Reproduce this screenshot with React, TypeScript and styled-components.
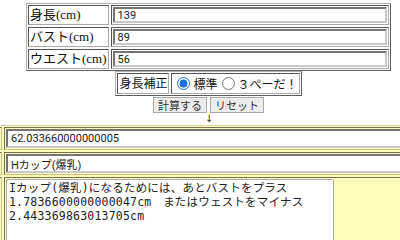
import React from 'react'
import styled, { createGlobalStyle } from 'styled-components'

const GlobalStyle = createGlobalStyle`
  html, body {
    margin: 0;
    padding: 0;
    background: #fff;
    overflow: hidden;
  }
  body {
    width: 400px;
    height: 240px;
  }
`

const Page = styled.div`
  width: 417px;
  display: flex;
  flex-direction: column;
  align-items: center;
  padding-top: 3px;
`

const FormTable = styled.div<{ columns: string; width?: string; size?: number }>`
  display: grid;
  grid-template-columns: ${({ columns }) => columns};
  width: ${({ width }) => width || 'auto'};
  box-sizing: border-box;
  gap: 2px;
  padding: 1px;
  border: 1px outset #b0b0b0;
  font-family: "Liberation Serif", "Noto Sans CJK JP", serif;
  font-size: ${({ size }) => size || 13}px;
  line-height: 16px;
  color: #111;
`

const Cell = styled.div<{ rowHeight?: number }>`
  border: 1px inset #a8a8a8;
  padding: 1px;
  display: flex;
  align-items: center;
  min-height: ${({ rowHeight }) => rowHeight || 16}px;
`

const TextInput = styled.input<{ tall?: boolean }>`
  width: 100%;
  box-sizing: border-box;
  height: ${({ tall }) => (tall ? '19px' : '16px')};
  margin: 0;
  padding: 0 3px;
  border: 2px inset #c8c8c8;
  font-family: Roboto, "Noto Sans CJK JP", sans-serif;
  font-size: 11px;
  color: #222;
  background: #fff;
`

const RadioLabel = styled.label`
  display: flex;
  align-items: center;
  font-family: "Noto Sans CJK JP", sans-serif;
  font-size: 12px;

  input {
    margin: 0 3px 0 4px;
    width: 13px;
    height: 13px;
    accent-color: #1a6fe8;
  }
`

const ButtonRow = styled.div`
  display: flex;
  gap: 3px;
  margin-top: 1px;
`

const Button = styled.button`
  font-family: "Noto Sans CJK JP", sans-serif;
  font-size: 11px;
  line-height: 12px;
  padding: 1px 4px;
  background: #ececec;
  border: 1px solid #a8a8a8;
  border-radius: 0;
  color: #333;
`

const Arrow = styled.div`
  font-family: "DejaVu Sans", sans-serif;
  font-size: 10px;
  line-height: 12px;
  color: #333;
  padding-left: 1px;
`

const ResultTable = styled.div`
  align-self: flex-start;
  margin-left: -60px;
  width: 520px;
  display: grid;
  grid-template-columns: 60px 1fr;
  gap: 2px;
  padding: 1px;
  border: 1px outset #d8d0a0;
  background: #fffcbc;
  font-family: "Liberation Serif", "Noto Sans CJK JP", serif;
  font-size: 13px;
  line-height: 17px;
  color: #111;
`

const ResultCell = styled.div`
  border: 1px inset #c8c088;
  padding: 1px;
  display: flex;
  align-items: flex-start;
  justify-content: flex-end;
  min-height: 19px;
  overflow: hidden;
`

const ResultValue = styled(ResultCell)`
  justify-content: flex-start;
`

const MessageBox = styled.textarea`
  width: 328px;
  height: 72px;
  box-sizing: border-box;
  margin: 0;
  padding: 1px 2px;
  border: 1px solid #a8a8a8;
  border-radius: 2px;
  font-family: "DejaVu Sans Mono", "Noto Sans CJK JP", monospace;
  font-size: 11.5px;
  letter-spacing: 0.2px;
  line-height: 14px;
  color: #222;
  resize: none;
  background: #fff;
`

const sizes = [
  { label: '身長(cm)', value: '139' },
  { label: 'バスト(cm)', value: '89' },
  { label: 'ウエスト(cm)', value: '56' },
]

const message =
  'Iカップ(爆乳)になるためには、あとバストをプラス\n1.7836600000000047cm　またはウェストをマイナス\n2.443369863013705cm'

export default function App() {
  return (
    <>
      <GlobalStyle />
      <Page>
        <FormTable columns="auto 1fr" width="365px">
          {sizes.map((s) => (
            <React.Fragment key={s.label}>
              <Cell>{s.label}</Cell>
              <Cell>
                <TextInput defaultValue={s.value} />
              </Cell>
            </React.Fragment>
          ))}
        </FormTable>
        <FormTable columns="auto auto" size={12}>
          <Cell rowHeight={17}>身長補正</Cell>
          <Cell rowHeight={17}>
            <RadioLabel>
              <input type="radio" name="adj" defaultChecked />
              標準
            </RadioLabel>
            <RadioLabel>
              <input type="radio" name="adj" />
              ３ぺーだ！
            </RadioLabel>
          </Cell>
        </FormTable>
        <ButtonRow>
          <Button>計算する</Button>
          <Button>リセット</Button>
        </ButtonRow>
        <Arrow>↓</Arrow>
        <ResultTable>
          <ResultCell>比)</ResultCell>
          <ResultValue>
            <TextInput tall defaultValue="62.033660000000005" />
          </ResultValue>
          <ResultCell />
          <ResultValue>
            <TextInput tall defaultValue="Hカップ(爆乳)" />
          </ResultValue>
          <ResultCell />
          <ResultValue>
            <MessageBox defaultValue={message} />
          </ResultValue>
        </ResultTable>
      </Page>
    </>
  )
}
